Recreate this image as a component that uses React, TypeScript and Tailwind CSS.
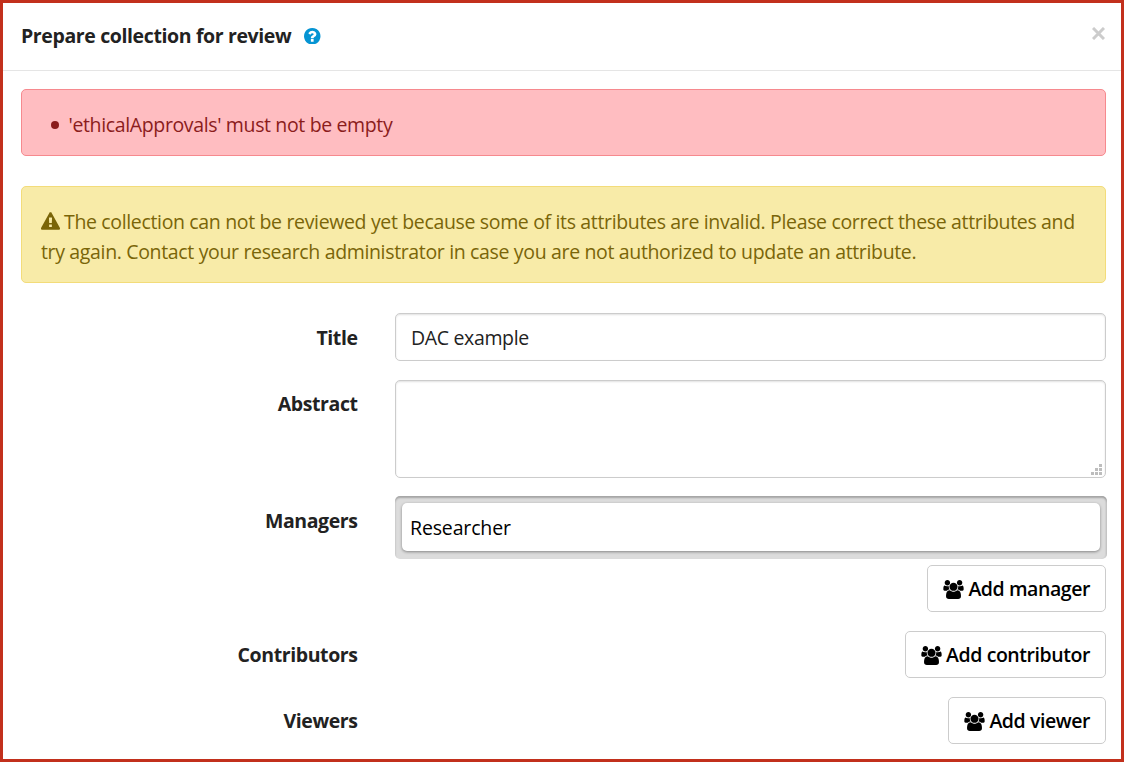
import type { ReactNode } from 'react';

function UsersIcon() {
  return (
    <svg viewBox="0 0 1920 1792" className="mt-px h-[19px] w-[21px] shrink-0" fill="currentColor" aria-hidden="true">
      <path d="M593 896q-162 5-265 128h-134q-82 0-138-40.500t-56-118.500q0-353 124-353 6 0 43.500 21t97.500 42.500 119 21.500q67 0 133-23-5 37-5 66 0 139 81 256zM1664 1533q0 120-73 189.500t-194 69.500h-874q-121 0-194-69.500t-73-189.500q0-53 3.500-103.500t14-109 26.500-108.500 43-97.500 62-81 85.500-53.500 111.500-20q10 0 43 21.500t73 48 107 48 135 21.500 135-21.500 107-48 73-48 43-21.500q61 0 111.500 20t85.500 53.500 62 81 43 97.500 26.500 108.500 14 109 3.500 103.500zM640 256q0 106-75 181t-181 75-181-75-75-181 75-181 181-75 181 75 75 181zM1344 640q0 159-112.500 271.500t-271.500 112.500-271.500-112.500-112.500-271.500 112.500-271.500 271.500-112.500 271.500 112.500 112.500 271.500zM1920 865q0 78-56 118.500t-138 40.500h-134q-103-123-265-128 81-117 81-256 0-29-5-66 66 23 133 23 59 0 119-21.500t97.500-42.500 43.500-21q124 0 124 353zM1792 256q0 106-75 181t-181 75-181-75-75-181 75-181 181-75 181 75 75 181z" />
    </svg>
  );
}

function HelpIcon() {
  return (
    <svg viewBox="128 128 1536 1536" className="ml-[13px] size-[16.5px] shrink-0 text-[#0594d3]" fill="currentColor" aria-hidden="true">
      <path d="M1024 1376v-192q0-14-9-23t-23-9h-192q-14 0-23 9t-9 23v192q0 14 9 23t23 9h192q14 0 23-9t9-23zm256-672q0-88-55.500-163t-138.500-116-170-41q-243 0-371 213-15 24 8 42l132 100q7 6 19 6 16 0 25-12 53-68 86-92 34-24 86-24 48 0 85.500 26t37.500 59q0 38-20 61t-68 45q-63 28-115.500 86.500t-52.500 125.500v36q0 14 9 23t23 9h192q14 0 23-9t9-23q0-19 21.500-49.500t54.500-49.500q32-18 49-28.500t46-35 44.500-48 28-60.500 12.500-81zm384 192q0 209-103 385.500t-279.500 279.500-385.500 103-385.500-103-279.500-279.500-103-385.500 103-385.500 279.500-279.500 385.500-103 385.500 103 279.500 279.500 103 385.500z" />
    </svg>
  );
}

function WarningIcon() {
  return (
    <svg viewBox="0 0 1792 1664" className="mr-1 inline-block h-[18px] w-[19px] align-[-1px]" fill="currentColor" aria-hidden="true">
      <path d="M1024 1375v-190q0-14-9.500-23.500t-22.500-9.500h-192q-13 0-22.500 9.500t-9.500 23.500v190q0 14 9.500 23.500t22.500 9.500h192q13 0 22.500-9.500t9.500-23.500zm-2-374l18-459q0-12-10-19-13-11-24-11h-220q-11 0-24 11-10 7-10 21l17 457q0 10 10 16.500t24 6.500h185q14 0 23.500-6.500t10.500-16.500zm-14-934l768 1408q35 63-2 126-17 29-46.500 46t-63.500 17h-1536q-34 0-63.500-17t-46.500-46q-37-63-2-126l768-1408q17-31 47-49t65-18 65 18 47 49z" />
    </svg>
  );
}

function ResizeGrip() {
  return (
    <svg viewBox="0 0 11 11" className="size-[11px]" fill="#bdbdbd" aria-hidden="true">
      <path d="M8 0h3v3h-3zM4 4h3v3h-3zM8 4h3v3h-3zM0 8h3v3h-3zM4 8h3v3h-3zM8 8h3v3h-3z" />
    </svg>
  );
}

function Row({ label, className, labelClass, children }: { label: string; className: string; labelClass: string; children: ReactNode }) {
  return (
    <div className={`flex ${className}`}>
      <div className={`w-[336.6px] shrink-0 text-right leading-[30px] font-bold tracking-[-0.4px] ${labelClass}`}>{label}</div>
      <div className="ml-[37.4px] flex min-w-0 flex-1 flex-col items-end">{children}</div>
    </div>
  );
}

function AddButton({ label }: { label: string }) {
  return (
    <button
      type="button"
      className="flex h-[47px] items-center gap-1 rounded-[5px] border border-[#ccc] bg-white px-[15px] font-semibold tracking-[-0.43px] text-black"
    >
      <UsersIcon />
      <span className="pt-px">{label}</span>
    </button>
  );
}

export default function App() {
  return (
    <div className="h-[762px] w-[1124px] overflow-hidden border-3 border-[#c2301c] bg-white font-['Open_Sans','Noto_Sans',sans-serif] text-[19.5px] tracking-[-0.345px] text-[#222]">
      <header className="flex h-[68px] items-center border-b border-[#e5e5e5] pr-[15px] pb-[1px] pl-[18px]">
        <h1 className="font-bold tracking-[-0.38px]">Prepare collection for review</h1>
        <HelpIcon />
        <button type="button" aria-label="Close" className="mb-[5px] ml-auto p-px text-[#ccc]">
          <svg viewBox="0 0 13 13" className="size-[13px]" fill="none" stroke="currentColor" strokeWidth="3">
            <path d="M1 1l11 11M12 1L1 12" />
          </svg>
        </button>
      </header>

      <main className="px-[18px] pt-[18px]">
        <div className="flex h-[67px] w-[1085.4px] items-center rounded-[5px] border border-[#f6898e] bg-[#ffbdc1] pt-[6px] pl-[29px] text-[#8b1c1c]">
          <span className="mb-px size-[8px] rounded-full bg-[#8b1c1c]" />
          <span className="mb-[2px] ml-[9.5px] tracking-[-0.36px]">'ethicalApprovals' must not be empty</span>
        </div>

        <div className="mt-[30px] h-[97px] w-[1085.4px] rounded-[5px] border border-[#f3dc7a] bg-[#f8eba8] pt-[20px] pl-[19px] leading-[30px] whitespace-nowrap text-[#7a6508]">
          <WarningIcon />
          The collection can not be reviewed yet because some of its attributes are invalid. Please correct these attributes and
          <br />
          try again. Contact your research administrator in case you are not authorized to update an attribute.
        </div>

        <div className="mt-[30px] w-[1085px]">
          <Row label="Title" className="h-[67px]" labelClass="pt-[10px]">
            <div className="flex h-12 w-full items-center rounded-[5px] border border-[#ccc] px-[15px] pt-px shadow-[inset_0_1px_2px_rgba(0,0,0,0.12)]">
              DAC example
            </div>
          </Row>
          <Row label="Abstract" className="h-[116px]" labelClass="pt-[9px]">
            <div className="flex h-[98px] w-full items-end justify-end rounded-[5px] border border-[#ccc] pr-[3px] pb-[2px] shadow-[inset_0_1px_2px_rgba(0,0,0,0.12)]">
              <ResizeGrip />
            </div>
          </Row>
          <Row label="Managers" className="h-[135px]" labelClass="pt-[10px]">
            <div className="-mr-px h-[63px] w-[712px] rounded-[5px] bg-[#dcdcdc] px-[7px] pt-[7px] shadow-[inset_0_2px_2px_rgba(0,0,0,0.25),inset_-2px_0_1px_rgba(0,0,0,0.04)]">
              <div className="flex h-[48px] items-center rounded-[5px] bg-white pt-[2px] pl-[8px] tracking-[-0.15px] text-black shadow-[0_1px_3px_rgba(0,0,0,0.4)]">
                Researcher
              </div>
            </div>
            <div className="mt-[6px]">
              <AddButton label="Add manager" />
            </div>
          </Row>
          <Row label="Contributors" className="h-[66px]" labelClass="pt-[9px]">
            <AddButton label="Add contributor" />
          </Row>
          <Row label="Viewers" className="h-[47px]" labelClass="pt-[9px]">
            <AddButton label="Add viewer" />
          </Row>
        </div>
      </main>
    </div>
  );
}
